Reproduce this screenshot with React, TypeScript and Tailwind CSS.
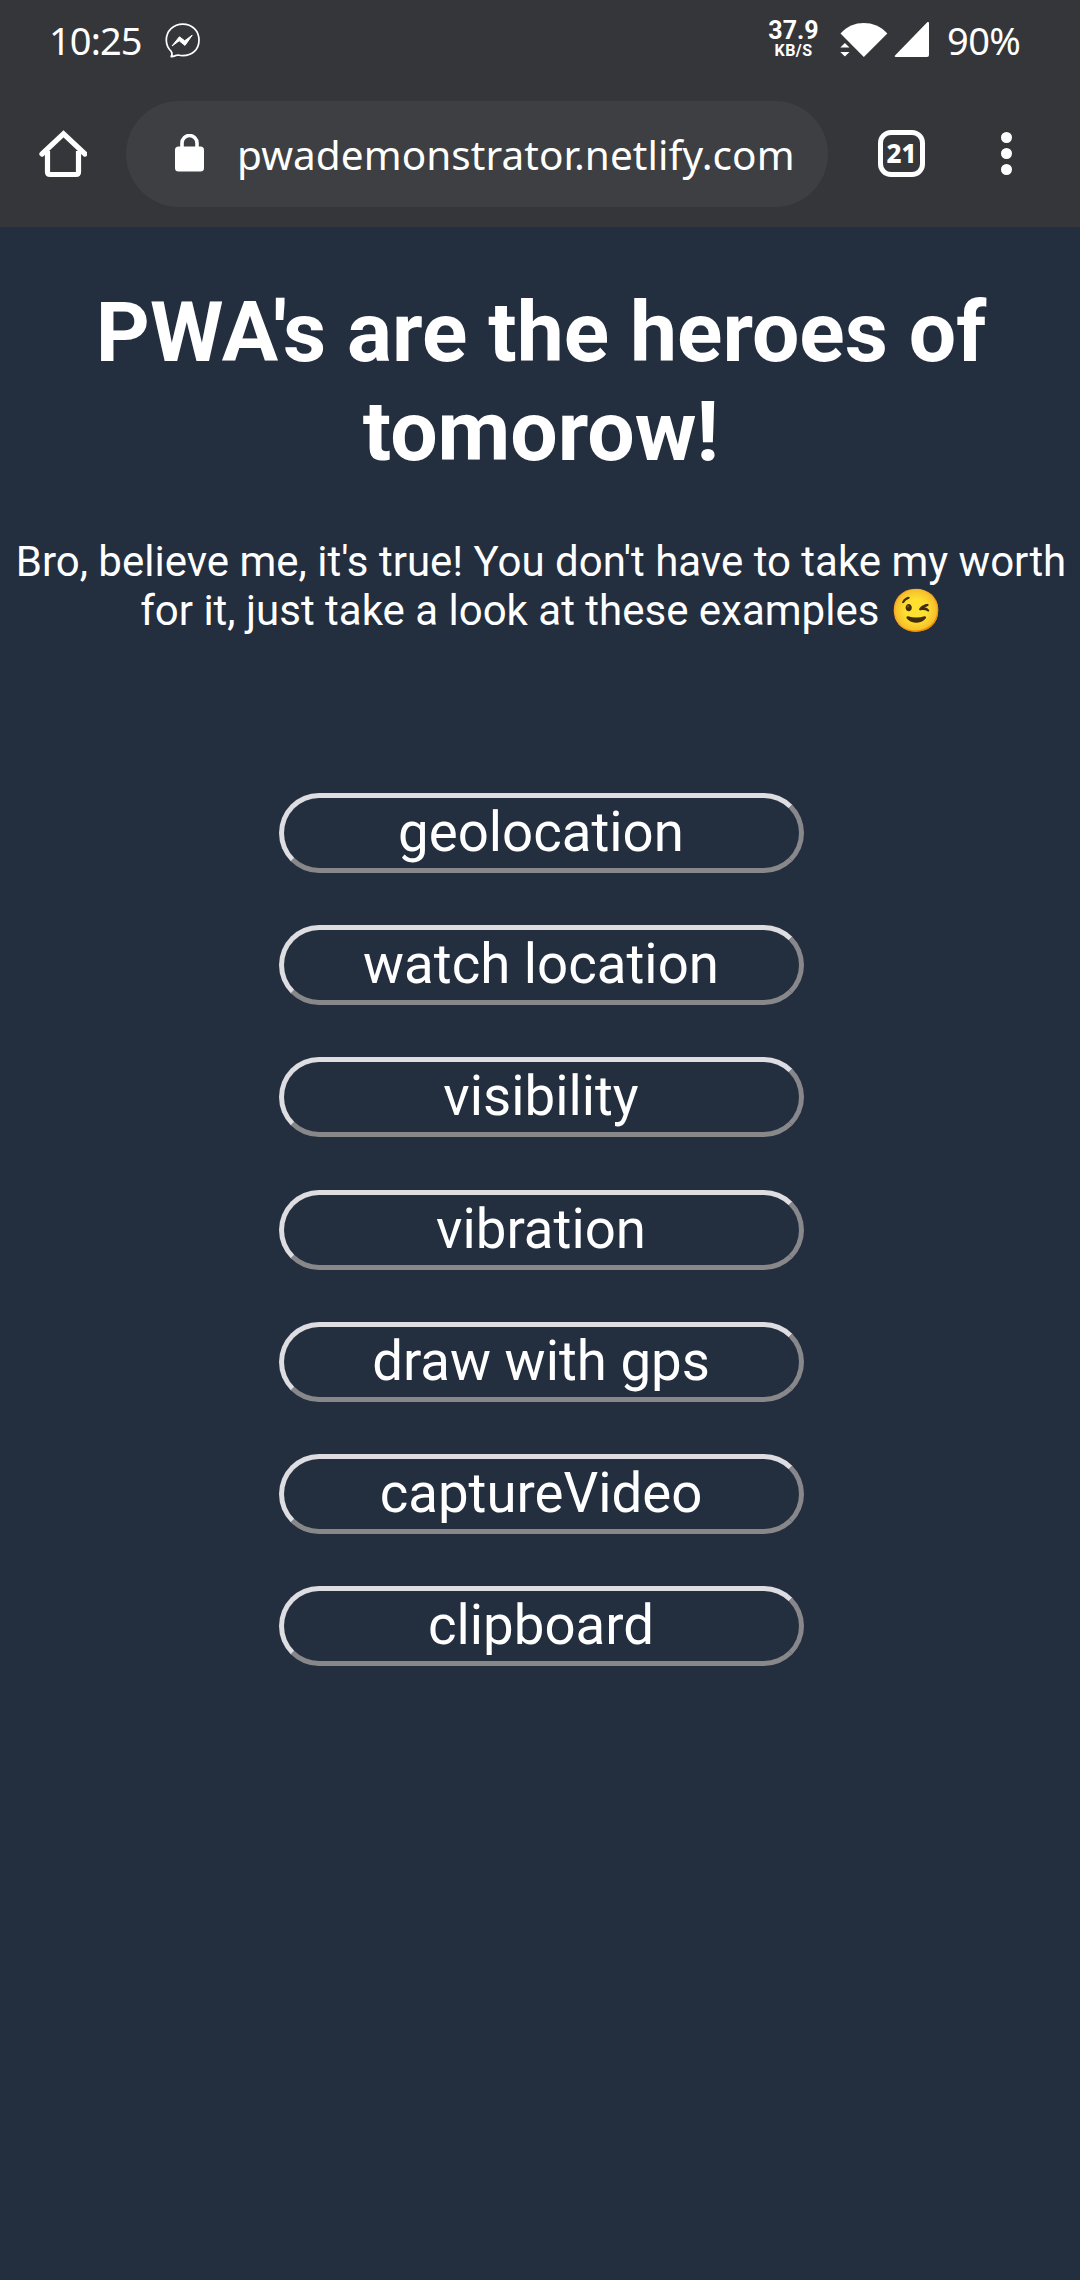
const examples = [
  'geolocation',
  'watch location',
  'visibility',
  'vibration',
  'draw with gps',
  'captureVideo',
  'clipboard',
];

function StatusBar() {
  return (
    <div className="flex h-[80px] items-center pl-[49px] pr-[58px]">
      <span className="w-[116px] pt-px text-[38px] leading-[79px] font-normal tracking-[-0.9px] whitespace-nowrap">10:25</span>
      <svg className="mt-px h-9 w-9 shrink-0" viewBox="0 0 36 36" fill="none">
        <path
          d="M6.2 33.6c1.1-1.6 1-3.500 0-5.200A16.300 16.300 0 0 1 1.300 17.200C1.300 8 8.400 1.100 17.800 1.100S34 8 34 17.200 27.200 32.600 17.800 32.600c-1.700 0-3.200-.2-4.700-.6-1.700-.2-4 1.800-6.900 1.600Z"
          stroke="white"
          strokeWidth="1.700"
          strokeLinejoin="round"
        />
        <path d="M7 23 14.400 13.800 19.700 17.800 27.200 12.200 20 22.400 14.200 17.800Z" fill="white" stroke="white" strokeLinejoin="round" />
      </svg>
      <div className="mr-[22px] mt-[-2px] ml-auto flex w-[49px] flex-col items-center font-['Roboto',sans-serif] font-bold whitespace-nowrap">
        <span className="text-[25px] leading-[22px]">37.9</span>
        <span className="mt-[2px] text-[16px] leading-[14px] tracking-[0.4px]">KB/S</span>
      </div>
      <svg className="h-9 w-[91px] shrink-0" viewBox="0 0 91 36" fill="white">
        <path d="M.5 11.500C7 4.200 15 1 23.800 1s17 3.200 23.500 10.500L23.800 35Z" />
        <path d="M.3 25.500 4.900 21 9.500 25.500ZM.3 30 4.900 34.500 9.500 30Z" />
        <path d="M87.500 0q1.500-.5 1.500 1.500V33q0 2-2 2H56q-2 0-1-1.500Z" />
      </svg>
      <span className="ml-[16px] w-[75px] pt-px text-[38px] leading-[79px] font-normal tracking-[-0.6px] whitespace-nowrap">90%</span>
    </div>
  );
}

function BrowserBar() {
  return (
    <div className="flex h-[147px] items-center">
      <svg className="ml-[39px] h-12 w-12 shrink-0" viewBox="0 0 48 48" fill="none" stroke="white" strokeWidth="5.200">
        <path d="M3 24 24.500 3.800 46 24" strokeLinecap="round" strokeLinejoin="miter" />
        <path d="M8.500 21V42q0 2.500 2.500 2.500H37q2.500 0 2.500-2.500V21" />
      </svg>
      <div className="ml-[39px] flex h-[106px] w-[702px] shrink-0 items-center rounded-full bg-[#3d3f42]">
        <svg className="ml-[49px] h-[38px] w-[29px] shrink-0 -translate-y-px" viewBox="0 0 29 38">
          <rect y="12.500" width="29" height="25" rx="3.500" fill="white" />
          <path d="M7 14V9a7.500 7.500 0 0 1 15 0v5" fill="none" stroke="white" strokeWidth="3.600" />
        </svg>
        <span className="ml-[33px] pt-[2px] text-[40.5px] leading-[104px] tracking-[0.07px] whitespace-nowrap">pwademonstrator.netlify.com</span>
      </div>
      <div className="ml-[50px] flex h-[47px] w-[47px] shrink-0 items-center justify-center rounded-[13px] border-[5px] border-white text-[26px] leading-none font-extrabold">
        <span className="-translate-y-px">21</span>
      </div>
      <div className="ml-[76px] flex flex-col gap-[5px]">
        <i className="h-[11px] w-[11px] rounded-full bg-white" />
        <i className="h-[11px] w-[11px] rounded-full bg-white" />
        <i className="h-[11px] w-[11px] rounded-full bg-white" />
      </div>
    </div>
  );
}

export default function App() {
  return (
    <div className="h-[2280px] w-[1080px] overflow-hidden bg-[#232e3f] font-['Noto_Sans',sans-serif] text-white">
      <header className="h-[227px] bg-[#35363a]">
        <StatusBar />
        <BrowserBar />
      </header>
      <main className="flex flex-col items-center pt-[56px] pl-[2px] text-center font-['Roboto',sans-serif]">
        <h1 className="text-[84px] leading-[99px] font-bold whitespace-nowrap">
          PWA's are the heroes of
          <br />
          tomorow!
        </h1>
        <p className="mt-[56px] text-[42px] leading-[49px] whitespace-nowrap">
          Bro, believe me, it's true! You don't have to take my worth
          <br />
          for it, just take a look at these examples 😉
        </p>
        <nav className="mt-[158px] flex flex-col gap-[52.2px]">
          {examples.map((name) => (
            <button
              key={name}
              className="h-20 w-[525px] rounded-full border-[5px] border-t-[#dddde2] border-r-[#88888c] border-b-[#88888a] border-l-[#dddde2] pb-[2px] text-[54.6px] leading-[68px]"
            >
              {name}
            </button>
          ))}
        </nav>
      </main>
    </div>
  );
}
